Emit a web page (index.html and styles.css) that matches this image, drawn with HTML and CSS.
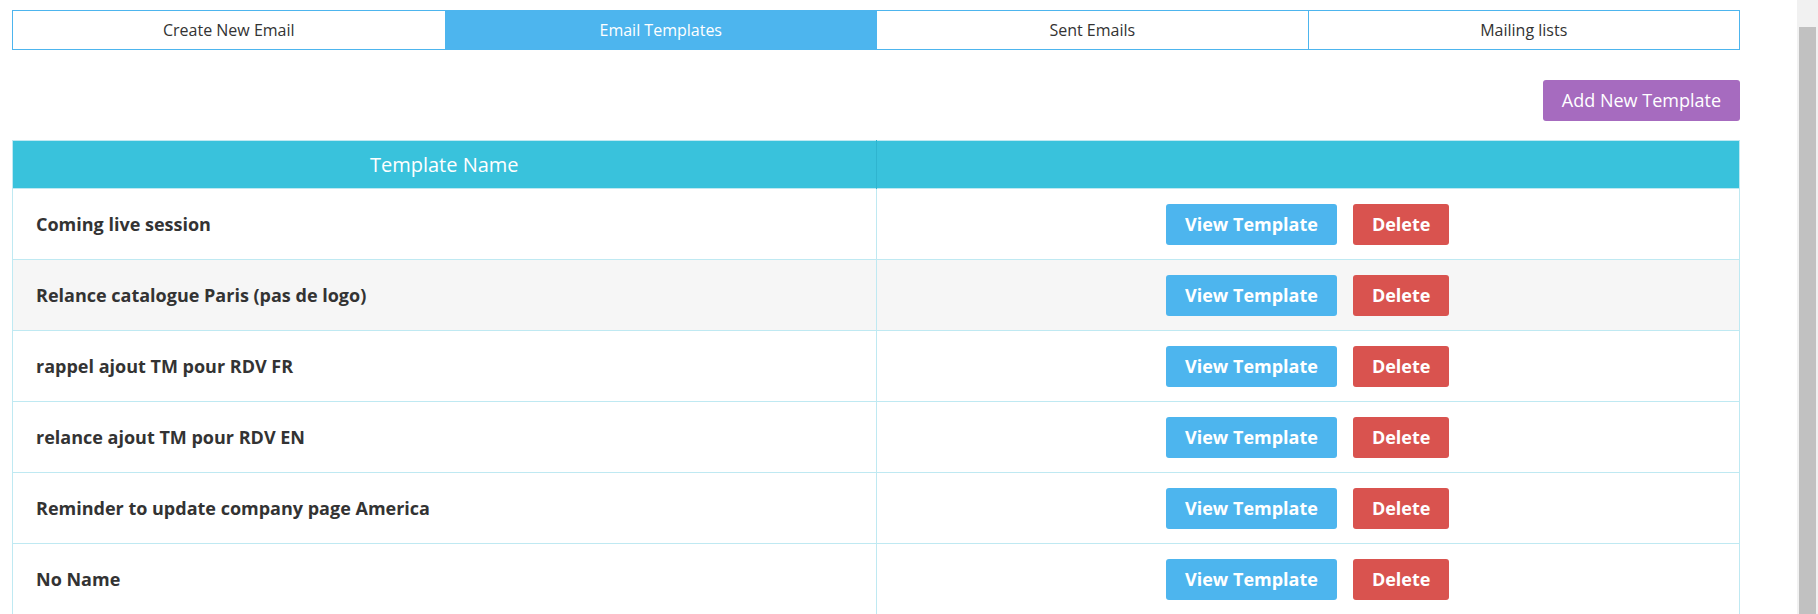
FILE: index.html
```html
<!DOCTYPE html>
<html lang="en">
<head>
<meta charset="utf-8">
<title>Email Templates</title>
<link rel="stylesheet" href="styles.css">
</head>
<body>
<div class="page">
  <main class="content">
    <nav class="tabs">
      <a class="tab">Create New Email</a>
      <a class="tab active">Email Templates</a>
      <a class="tab">Sent Emails</a>
      <a class="tab">Mailing lists</a>
    </nav>
    <div class="toolbar">
      <button class="btn btn-purple">Add New Template</button>
    </div>
    <table class="templates">
      <thead>
        <tr><th>Template Name</th><th></th></tr>
      </thead>
      <tbody>
        <tr><td class="name">Coming live session</td><td class="actions"><div class="btns"><button class="btn btn-blue">View Template</button><button class="btn btn-red">Delete</button></div></td></tr>
        <tr class="hovered"><td class="name">Relance catalogue Paris (pas de logo)</td><td class="actions"><div class="btns"><button class="btn btn-blue">View Template</button><button class="btn btn-red">Delete</button></div></td></tr>
        <tr><td class="name">rappel ajout TM pour RDV FR</td><td class="actions"><div class="btns"><button class="btn btn-blue">View Template</button><button class="btn btn-red">Delete</button></div></td></tr>
        <tr><td class="name">relance ajout TM pour RDV EN</td><td class="actions"><div class="btns"><button class="btn btn-blue">View Template</button><button class="btn btn-red">Delete</button></div></td></tr>
        <tr><td class="name">Reminder to update company page America</td><td class="actions"><div class="btns"><button class="btn btn-blue">View Template</button><button class="btn btn-red">Delete</button></div></td></tr>
        <tr><td class="name">No Name</td><td class="actions"><div class="btns"><button class="btn btn-blue">View Template</button><button class="btn btn-red">Delete</button></div></td></tr>
      </tbody>
    </table>
  </main>
  <div class="scrollbar"><div class="thumb"></div></div>
</div>
</body>
</html>
```

FILE: styles.css
```css
html, body {
  margin: 0;
  padding: 0;
  height: 100%;
  overflow: hidden;
  background: #ffffff;
}
body {
  font-family: "Open Sans", "Liberation Sans", sans-serif;
  color: #333333;
}
.page {
  display: flex;
  height: 614px;
}
.content {
  flex: 1;
  padding: 10px 57px 0 12px;
  min-width: 0;
}
.tabs {
  display: grid;
  grid-template-columns: repeat(4, 1fr);
  border: 1px solid #4db5ee;
  height: 38px;
}
.tab {
  font-size: 16px;
  line-height: 38px;
  text-align: center;
  color: #333333;
  border-left: 1px solid #4db5ee;
}
.tab:first-child {
  border-left: none;
}
.tab.active {
  background: #4db5ee;
  color: #ffffff;
}
.toolbar {
  display: flex;
  justify-content: flex-end;
  margin-top: 30px;
  margin-bottom: 19px;
}
.btn {
  font-family: "Open Sans", "Liberation Sans", sans-serif;
  border: none;
  border-radius: 3px;
  color: #ffffff;
  font-size: 18px;
  padding: 8px 19px;
  line-height: 24px;
  cursor: pointer;
}
.btn-purple {
  background: #a66bbf;
  font-weight: 400;
  padding: 8px 19px;
  line-height: 25px;
}
.btn-blue {
  background: #4db5ee;
  font-weight: 700;
  line-height: 25px;
}
.btn-red {
  background: #d9534f;
  font-weight: 700;
  line-height: 25px;
}
.templates {
  width: 100%;
  border-collapse: collapse;
  table-layout: fixed;
  border: 1px solid #bfe9f2;
}
.templates th {
  background: #39c2dc;
  color: #ffffff;
  font-size: 20px;
  font-weight: 400;
  height: 47px;
  padding: 0;
  text-align: center;
  border-right: 1px solid #2fb4cf;
}
.templates th:last-child {
  border-right: none;
}
.templates td {
  height: 70px;
  padding: 0 23px;
  border-top: 1px solid #bfe9f2;
  border-right: 1px solid #bfe9f2;
  vertical-align: middle;
}
.templates tbody tr.hovered td {
  background: #f6f6f6;
}
.templates td.name {
  font-size: 18px;
  font-weight: 700;
  color: #333333;
}
.btns {
  display: flex;
  justify-content: center;
  gap: 16px;
}
.scrollbar {
  width: 21px;
  background: #f1f1f1;
  padding-top: 27px;
  display: flex;
  justify-content: center;
}
.thumb {
  width: 17px;
  height: 700px;
  background: #c1c1c1;
}
```
